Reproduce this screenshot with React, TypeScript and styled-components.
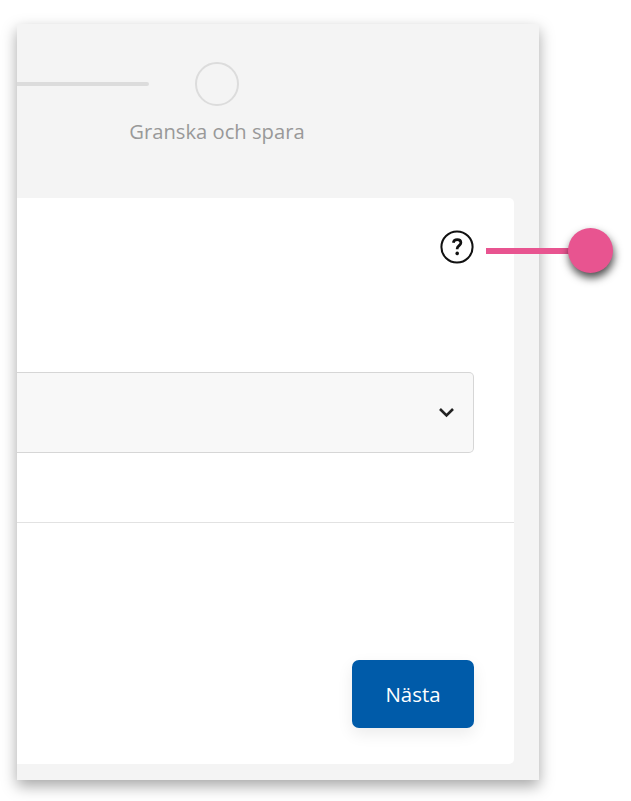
import React from 'react';
import styled, { createGlobalStyle } from 'styled-components';

const GlobalStyle = createGlobalStyle`
  html, body {
    margin: 0;
    padding: 0;
    background: #fff;
    font-family: "Open Sans", "Liberation Sans", sans-serif;
  }
`;

const Page = styled.div`
  position: relative;
  width: 631px;
  height: 801px;
  padding: 24px 92px 0 17px;
  box-sizing: border-box;
  overflow: hidden;
`;

const Panel = styled.div`
  display: flex;
  flex-direction: column;
  height: 756px;
  background: #f4f4f4;
  padding-right: 25px;
  padding-bottom: 16px;
  box-sizing: border-box;
  box-shadow: 0 6px 14px rgba(0, 0, 0, 0.35);
`;

const Stepper = styled.div`
  display: flex;
  height: 174px;
  flex-shrink: 0;
  padding-top: 38px;
  box-sizing: border-box;
`;

const StepLine = styled.div`
  width: 132px;
  height: 4px;
  margin-top: 20px;
  background: #dcdcdc;
  border-radius: 0 2px 2px 0;
`;

const Step = styled.div`
  display: flex;
  flex-direction: column;
  align-items: center;
  width: 180px;
  margin-left: -22px;
`;

const StepCircle = styled.div`
  width: 44px;
  height: 44px;
  border: 2px solid #dcdcdc;
  border-radius: 50%;
  box-sizing: border-box;
`;

const StepLabel = styled.div`
  margin-top: 12px;
  font-size: 20.2px;
  line-height: 27px;
  color: #999;
  white-space: nowrap;
`;

const Card = styled.div`
  flex: 1;
  display: flex;
  flex-direction: column;
  background: #fff;
  border-radius: 0 5px 5px 0;
`;

const CardBody = styled.div`
  height: 325px;
  flex-shrink: 0;
  padding: 32px 40px 0 0;
  box-sizing: border-box;
  border-bottom: 1px solid #e2e2e2;
`;

const HelpRow = styled.div`
  display: flex;
  justify-content: flex-end;
  height: 34px;
`;

const HelpIcon = styled.svg`
  width: 34px;
  height: 34px;
  display: block;
`;

const Select = styled.div`
  display: flex;
  align-items: center;
  justify-content: flex-end;
  height: 81px;
  margin-top: 108px;
  padding-right: 18px;
  background: #f8f8f8;
  border: 1px solid #d6d6d6;
  border-left: none;
  border-radius: 0 5px 5px 0;
  box-sizing: border-box;
`;

const Chevron = styled.svg`
  width: 17px;
  height: 11px;
  display: block;
`;

const Footer = styled.div`
  flex: 1;
  display: flex;
  align-items: flex-start;
  justify-content: flex-end;
  padding: 137px 40px 0 0;
`;

const NextButton = styled.button`
  width: 122px;
  height: 68px;
  background: #005ba9;
  color: #fff;
  border: none;
  border-radius: 7px;
  font-family: inherit;
  font-size: 20.4px;
  box-shadow: 0 6px 16px rgba(0, 0, 0, 0.08);
`;

const MarkerLine = styled.div`
  position: absolute;
  left: 486px;
  top: 248px;
  width: 90px;
  height: 6px;
  background: #e85490;
`;

const MarkerDot = styled.div`
  position: absolute;
  left: 568px;
  top: 228px;
  width: 45px;
  height: 45px;
  border-radius: 50%;
  background: #e85490;
  box-shadow: 1px 5px 8px rgba(0, 0, 0, 0.7);
`;

export default function App() {
  return (
    <>
      <GlobalStyle />
      <Page>
        <Panel>
          <Stepper>
            <StepLine />
            <Step>
              <StepCircle />
              <StepLabel>Granska och spara</StepLabel>
            </Step>
          </Stepper>
          <Card>
            <CardBody>
              <HelpRow>
                <HelpIcon viewBox="0 0 34 34" fill="none">
                  <circle cx="17" cy="17" r="15.6" stroke="#111" strokeWidth="2" />
                  <path
                    d="M13.3 12.8c.3-2 1.8-3.2 3.9-3.2 2.2 0 3.7 1.3 3.7 3.1 0 2.8-3.7 3-3.7 5.9v.6"
                    stroke="#111"
                    strokeWidth="2.7"
                  />
                  <circle cx="17.2" cy="23.4" r="1.8" fill="#111" />
                </HelpIcon>
              </HelpRow>
              <Select>
                <Chevron viewBox="0 0 17 11" fill="none">
                  <path d="M2 2l6.5 6.5L15 2" stroke="#222" strokeWidth="2.6" />
                </Chevron>
              </Select>
            </CardBody>
            <Footer>
              <NextButton>Nästa</NextButton>
            </Footer>
          </Card>
        </Panel>
        <MarkerLine />
        <MarkerDot />
      </Page>
    </>
  );
}
